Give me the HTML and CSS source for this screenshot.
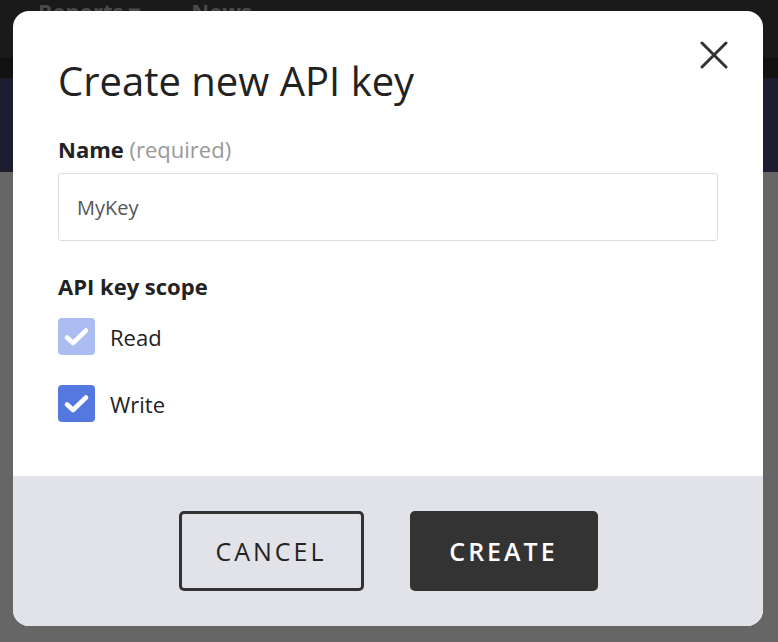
FILE: index.html
```html
<!DOCTYPE html>
<html>
<head>
<meta charset="utf-8">
<link rel="stylesheet" href="styles.css">
</head>
<body>
<div class="page">
  <header class="nav">
    <span class="nav-item">Reports ▾</span>
    <span class="nav-item">News</span>
  </header>
  <div class="subbar"></div>
  <div class="band"></div>
  <div class="rest"></div>
</div>
<div class="overlay">
  <div class="modal">
    <div class="modal-body">
      <button class="close" aria-label="Close">
        <svg width="28" height="28" viewBox="0 0 28 28"><path d="M2 2 L26 26 M26 2 L2 26" stroke="#333" stroke-width="3" stroke-linecap="round" fill="none"/></svg>
      </button>
      <h1 class="title">Create new API key</h1>
      <label class="field-label">Name <span class="hint">(required)</span></label>
      <div class="input">MyKey</div>
      <div class="section-label">API key scope</div>
      <div class="check-row">
        <span class="box box-disabled"><svg width="37" height="37" viewBox="0 0 37 37"><path d="M9 19.5 L15 25 L28 12.5" stroke="#fff" stroke-width="4.6" stroke-linecap="round" stroke-linejoin="round" fill="none"/></svg></span>
        <span class="check-label">Read</span>
      </div>
      <div class="check-row">
        <span class="box"><svg width="37" height="37" viewBox="0 0 37 37"><path d="M9 19.5 L15 25 L28 12.5" stroke="#fff" stroke-width="4.6" stroke-linecap="round" stroke-linejoin="round" fill="none"/></svg></span>
        <span class="check-label">Write</span>
      </div>
    </div>
    <div class="modal-footer">
      <button class="btn btn-outline">CANCEL</button>
      <button class="btn btn-solid">CREATE</button>
    </div>
  </div>
</div>
</body>
</html>
```
FILE: styles.css
```css
* { box-sizing: border-box; }
html, body { margin: 0; padding: 0; }
body {
  width: 778px;
  height: 642px;
  overflow: hidden;
  font-family: "Open Sans", "Noto Sans", sans-serif;
  background: #666;
  position: relative;
}
.page { display: flex; flex-direction: column; height: 642px; }
.nav {
  height: 58px;
  background: #1a1a1a;
  display: flex;
  gap: 51px;
  padding-left: 38px;
  align-items: flex-start;
}
.nav-item {
  color: #4a4a4a;
  font-weight: 700;
  font-size: 22px;
  line-height: 22px;
}
.subbar { height: 20px; background: #111; }
.band { height: 94px; background: #1c1c2e; }
.rest { flex: 1; background: #666; }
.overlay {
  position: absolute;
  inset: 0;
  padding: 11px 15px 16px 13px;
}
.modal {
  width: 750px;
  height: 615px;
  background: #fff;
  border-radius: 16px;
  overflow: hidden;
  display: flex;
  flex-direction: column;
}
.modal-body {
  position: relative;
  flex: 1;
  padding: 48px 45px 0 45px;
}
.close {
  position: absolute;
  top: 30px;
  right: 35px;
  border: 0;
  background: none;
  padding: 0;
  width: 28px;
  height: 28px;
}
.close svg { display: block; }
.title {
  margin: 0;
  font-weight: 400;
  font-size: 40px;
  line-height: 44px;
  color: #222;
}
.field-label {
  display: block;
  margin-top: 31px;
  font-weight: 700;
  font-size: 22px;
  line-height: 30px;
  color: #222;
}
.hint { font-weight: 400; color: #999; }
.input {
  margin-top: 9px;
  height: 68px;
  border: 1px solid #ddd;
  border-radius: 3px;
  padding: 0 18px;
  display: flex;
  align-items: center;
  font-size: 20px;
  color: #555;
}
.section-label {
  margin-top: 30px;
  font-weight: 700;
  font-size: 22px;
  line-height: 30px;
  color: #222;
}
.check-row {
  display: flex;
  align-items: center;
  gap: 15px;
  margin-top: 17px;
  height: 37px;
}
.check-row + .check-row { margin-top: 30px; }
.box {
  width: 37px;
  height: 37px;
  border-radius: 4px;
  background: #5577e0;
  display: flex;
  align-items: center;
  justify-content: center;
}
.box svg { display: block; }
.box-disabled { background: #abbcf1; }
.check-label { font-size: 22px; color: #222; }
.modal-footer {
  height: 150px;
  background: #e2e3e8;
  display: flex;
  justify-content: center;
  align-items: center;
  gap: 46px;
}
.btn {
  height: 80px;
  border-radius: 5px;
  font-family: "Open Sans", "Noto Sans", sans-serif;
  font-size: 25px;
  letter-spacing: 3px;
  padding: 0;
}
.btn-outline {
  width: 185px;
  background: transparent;
  border: 3px solid #333;
  color: #222;
}
.btn-solid {
  width: 188px;
  background: #333;
  border: 0;
  color: #fff;
  font-weight: 600;
}
```
